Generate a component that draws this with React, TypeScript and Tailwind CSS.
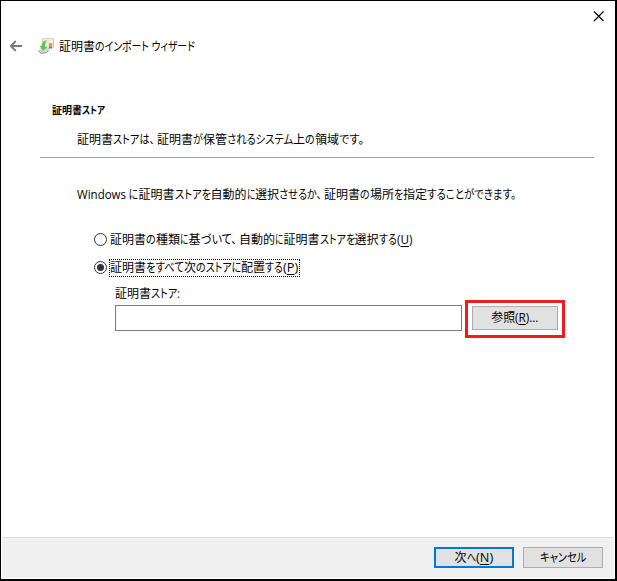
import { useLayoutEffect, useRef, useState } from "react";
import type { ReactNode } from "react";

/* ===================== TYPES ===================== */
type Segment = [text: ReactNode, width: number];

/* ===================== TEXT ===================== */
const title: Segment[] = [
  ["証明書", 36],
  ["のインポート", 53.5],
  ["\u2005ウィザード", 46],
];

const heading: Segment[] = [
  ["証明書", 30],
  ["ストア", 23],
];

const description: Segment[] = [
  ["証明書", 36],
  ["ストアは、\u2005", 44],
  ["証明書", 36],
  ["が", 10],
  ["保管", 24],
  ["されるシステム", 66],
  ["上", 12],
  ["の", 10],
  ["領域", 24],
  ["です。\u2005", 28],
];

const guide: Segment[] = [
  ["Windows", 49],
  ["\u00a0に", 12.5],
  ["証明書", 36],
  ["ストアを", 36],
  ["自動的", 36],
  ["に", 8.5],
  ["選択", 24],
  ["させるか、\u2005", 45],
  ["証明書", 36],
  ["の", 10],
  ["場所", 24],
  ["を", 9],
  ["指定", 24],
  ["することができます。\u2005", 92],
];

const optionAuto: Segment[] = [
  ["証明書", 36],
  ["の", 10],
  ["種類", 24],
  ["に", 8.5],
  ["基", 12],
  ["づいて、\u2005", 38.5],
  ["自動的", 36],
  ["に", 8.5],
  ["証明書", 36],
  ["ストアを", 35],
  ["選択", 24],
  ["する", 18],
  [<>(<u>U</u>)</>, 15.5],
];

const optionPlace: Segment[] = [
  ["証明書", 36],
  ["をすべて", 38],
  ["次", 12],
  ["のストアに", 45],
  ["配置", 24],
  ["する", 18],
  [<>(<u>P</u>)</>, 15],
];

const storeLabel: Segment[] = [
  ["証明書", 36],
  ["ストア:", 28.5],
];

/* ===================== COMPONENT ===================== */
export default function App() {
  const [mode, setMode] = useState<"auto" | "place">("place");
  const [store, setStore] = useState("");

  return (
    <div className="flex h-[581px] w-[617px] flex-col border border-r-2 border-b-2 border-black bg-white px-px pb-px font-['Open_Sans','Noto_Sans_CJK_JP',sans-serif] text-[12px] leading-4 text-black">
      {/* TITLE BAR */}
      <div className="flex h-[28px] items-start justify-end pt-[10px] pr-[10px]">
        <button aria-label="閉じる">
          <svg width="11" height="11" viewBox="0 0 11 11" fill="none" stroke="#000" strokeWidth="1.1">
            <path d="M1 .5 10.5 10M10.5 .5 1 10" />
          </svg>
        </button>
      </div>

      {/* WIZARD HEADER */}
      <div className="flex h-[34px] items-center pl-[7px]">
        <svg className="mr-[16px]" width="13" height="12" viewBox="0 0 13 12" fill="none" stroke="#777" strokeWidth="1.8">
          <path d="M13 6H2M6.8 1 1.8 6l5 5" />
        </svg>
        <CertIcon />
        <div className="mt-[1px] ml-[5px]">
          <Line segments={title} />
        </div>
      </div>

      {/* PAGE HEADING */}
      <div className="mr-[20px] ml-[38px] border-b border-[#a0a0a0] pt-[39px] pl-[12px] pb-[9px]">
        <div className="text-[10px] font-bold">
          <Line segments={heading} />
        </div>
        <div className="mt-[14px] ml-[25px]">
          <Line segments={description} />
        </div>
      </div>

      {/* BODY */}
      <div className="flex-1 pt-[29px] pl-[75px]">
        <Line segments={guide} />

        <div className="mt-[29px] ml-[17px] flex items-start">
          <Radio checked={mode === "auto"} onSelect={() => setMode("auto")} />
          <div className="ml-[3px]">
            <Line segments={optionAuto} />
          </div>
        </div>
        <div className="mt-[11px] ml-[17px] flex items-start">
          <Radio checked={mode === "place"} onSelect={() => setMode("place")} />
          <div className="ml-[2px] border border-dotted border-black pr-px">
            <Line segments={optionPlace} />
          </div>
        </div>

        <div className="mt-[9px] ml-[38px]">
          <Line segments={storeLabel} />
        </div>
        <div className="-mt-[2px] ml-[38px] flex items-start">
          <input
            value={store}
            onChange={e => setStore(e.target.value)}
            className="mt-[5px] h-[26px] w-[347px] border border-[#7a7a7a] px-1 outline-none"
          />
          <div className="ml-[3px] flex h-[38px] w-[100px] items-start justify-center border-[3px] border-[#ed1c24] pt-[3px]">
            <button className="flex h-[24px] w-[86px] items-center justify-center border border-[#adadad] bg-[#e1e1e1]">
              <Line segments={[["参照", 24], [<>(<u>R</u>)...</>, 23.5]]} />
            </button>
          </div>
        </div>
      </div>

      {/* FOOTER */}
      <div className="flex h-[41px] items-start justify-end gap-[9px] border-t border-[#dfdfdf] bg-[#f0f0f0] pt-[9px] pr-[11px]">
        <button className="flex h-[21px] w-[80px] items-center justify-center border-2 border-[#0078d7] bg-[#e1e1e1] pr-px">
          <Line segments={[["次", 12], ["へ", 9], [<>(<u>N</u>)</>, 17]]} />
        </button>
        <button className="flex h-[21px] w-[80px] items-center justify-center border border-[#adadad] bg-[#e1e1e1]">
          <Line segments={[["キャンセル", 46]]} />
        </button>
      </div>
    </div>
  );
}

/* ===================== LINE ===================== */
function Line({ segments }: { segments: Segment[] }) {
  return (
    <div className="flex whitespace-nowrap">
      {segments.map(([text, width], i) => (
        <Condensed key={i} width={width}>
          {text}
        </Condensed>
      ))}
    </div>
  );
}

// squeezes its text to the given advance width, like the narrow kana of a UI font
function Condensed({ width, children }: { width: number; children: ReactNode }) {
  const ref = useRef<HTMLSpanElement>(null);
  const [scale, setScale] = useState(1);

  useLayoutEffect(() => {
    if (ref.current) setScale(width / ref.current.offsetWidth);
  }, [width]);

  return (
    <span className="inline-block shrink-0" style={{ width }}>
      <span
        ref={ref}
        className="inline-block origin-left whitespace-pre [font-feature-settings:'palt'] [&_u]:underline-offset-2"
        style={{ transform: scale === 1 ? undefined : `scaleX(${scale})` }}
      >
        {children}
      </span>
    </span>
  );
}

/* ===================== RADIO ===================== */
function Radio({ checked, onSelect }: { checked: boolean; onSelect: () => void }) {
  return (
    <button
      role="radio"
      aria-checked={checked}
      onClick={onSelect}
      className={`flex size-[13px] items-center justify-center rounded-full border border-[#333] bg-white ${
        checked ? "mt-[2px]" : "mt-px"
      }`}
    >
      {checked && <span className="size-[7px] rounded-full bg-[#333]" />}
    </button>
  );
}

/* ===================== ICON ===================== */
function CertIcon() {
  return (
    <svg width="16" height="16" viewBox="0 0 16 16">
      <path d="M4.5 .8h11v9h-11z" fill="#f8f5ef" stroke="#d2c5ae" />
      <path d="M7 3h6M7 5h4" stroke="#d8d8d8" />
      <path d="M0 12.5 3 10h8l-2 4-6 2z" fill="#d5d8d8" />
      <path d="M.3 13 3 15.2 8.5 14.7 11 11.5" fill="none" stroke="#8d9595" strokeWidth="1" />
      <path d="M8.5 2.5C5.5 3 4 5 4.2 8H2l3 4.5L9 9H7C6.5 6.5 7 4.5 8.5 2.5z" fill="#42cf42" stroke="#69bd5c" strokeWidth=".5" />
      <path d="M11.3 7.5 10.8 11l1.7-1 1.3 1V7.5z" fill="#477bb8" />
      <circle cx="12.5" cy="6.8" r="2" fill="#e9a21b" />
    </svg>
  );
}
